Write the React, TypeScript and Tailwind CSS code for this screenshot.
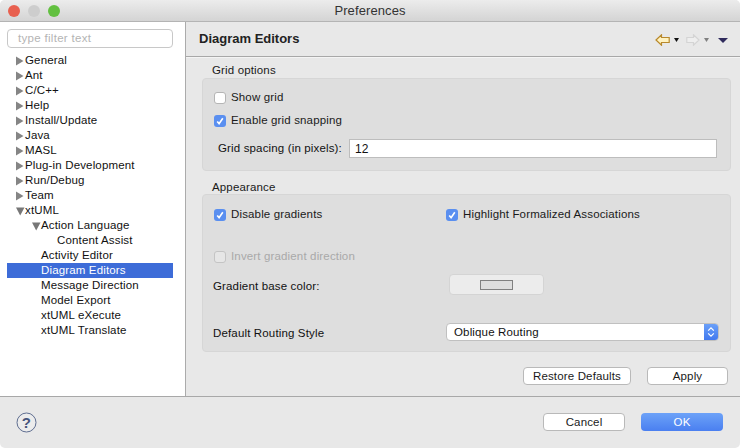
import React from "react";

function Tri({ open }: { open?: boolean }) {
  return (
    <svg width="9" height="10" viewBox="0 0 9 10" className="shrink-0">
      {open ? <path d="M0 1.5H8.5L4.2 9.5Z" fill="#777" /> : <path d="M0 0.5V9.5L7.5 5Z" fill="#858585" />}
    </svg>
  );
}

function TreeRow({ label, level = 0, arrow, open, selected }: { label: string; level?: number; arrow?: boolean; open?: boolean; selected?: boolean }) {
  const pad = level === 0 ? "pl-[9px]" : level === 1 ? "pl-[25px]" : "pl-[41px]";
  return (
    <div className={`h-[15px] flex items-center ${pad} ${selected ? "bg-[#3d6cd8] text-white" : "text-[#111]"}`}>
      <span className="w-[9px] flex justify-center">{arrow && <Tri open={open} />}</span>
      <span>{label}</span>
    </div>
  );
}

function Check({ label, checked, disabled }: { label: string; checked?: boolean; disabled?: boolean }) {
  return (
    <div className={`flex items-center gap-[5px] h-[15px] ${disabled ? "text-[#a9a9a9]" : "text-[#1a1a1a]"}`}>
      <span className={`w-[12px] h-[12px] rounded-[3px] flex items-center justify-center ${checked ? "bg-[#5a8ff0]" : disabled ? "bg-[#e6e6e6] border border-[#c4c4c4]" : "bg-white border border-[#b5b5b5]"}`}>
        {checked && (
          <svg width="8" height="8" viewBox="0 0 8 8">
            <path d="M1.2 4.4L3.1 6.6L6.8 1.2" stroke="white" strokeWidth="1.6" fill="none" />
          </svg>
        )}
      </span>
      <span>{label}</span>
    </div>
  );
}

function Btn({ label, w, primary }: { label: string; w: string; primary?: boolean }) {
  return (
    <button className={`${w} h-[18px] rounded-[4px] flex items-center justify-center pt-[1px] ${primary ? "bg-gradient-to-b from-[#6da2f8] to-[#4a7ff0] text-white" : "bg-white border border-[#b9b9b9] text-[#1a1a1a]"}`}>
      {label}
    </button>
  );
}

export default function App() {
  return (
    <div className="w-[740px] h-[448px] flex flex-col overflow-hidden bg-[#e8e8e8] rounded-[5px] text-[11.5px] tracking-[0.15px]" style={{ fontFamily: '"Liberation Sans", Arial, sans-serif' }}>
      <div className="h-[22px] shrink-0 relative flex items-center justify-center bg-gradient-to-b from-[#ececec] to-[#d4d4d4] border-b border-[#b4b4b4] text-[13px] tracking-[0.1px] text-[#333]">
        <div className="absolute left-[8px] top-[5px] flex gap-[8px]">
          <span className="w-[12px] h-[12px] rounded-full bg-[#e8604f]" />
          <span className="w-[12px] h-[12px] rounded-full bg-[#cdcdcd]" />
          <span className="w-[12px] h-[12px] rounded-full bg-[#62c040]" />
        </div>
        Preferences
      </div>
      <div className="flex-1 flex min-h-0">
        <div className="w-[186px] shrink-0 flex flex-col bg-white border-r border-[#ababab]">
          <div className="pl-[7px] pt-[7px] pb-[5px]">
            <div className="w-[166px] h-[19px] bg-white border border-[#c8c8c8] rounded-[4px] pl-[10px] flex items-center text-[#b4b4b4] tracking-[0.3px]">type filter text</div>
          </div>
          <div className="pl-[7px] pr-[12px]">
            <TreeRow label="General" arrow />
            <TreeRow label="Ant" arrow />
            <TreeRow label="C/C++" arrow />
            <TreeRow label="Help" arrow />
            <TreeRow label="Install/Update" arrow />
            <TreeRow label="Java" arrow />
            <TreeRow label="MASL" arrow />
            <TreeRow label="Plug-in Development" arrow />
            <TreeRow label="Run/Debug" arrow />
            <TreeRow label="Team" arrow />
            <TreeRow label="xtUML" arrow open />
            <TreeRow label="Action Language" level={1} arrow open />
            <TreeRow label="Content Assist" level={2} />
            <TreeRow label="Activity Editor" level={1} />
            <TreeRow label="Diagram Editors" level={1} selected />
            <TreeRow label="Message Direction" level={1} />
            <TreeRow label="Model Export" level={1} />
            <TreeRow label="xtUML eXecute" level={1} />
            <TreeRow label="xtUML Translate" level={1} />
          </div>
        </div>
        <div className="flex-1 flex flex-col">
          <div className="h-[35px] shrink-0 flex items-center justify-between pl-[13px] pr-[12px] border-b border-[#a8a8a8]">
            <span className="font-bold text-[13px] tracking-[0px] text-[#222]">Diagram Editors</span>
            <div className="flex items-center pt-[2px]">
              <svg width="15" height="12" viewBox="0 0 15 12">
                <path d="M1 6L6.5 0.8V3.5H14.2V8.5H6.5V11.2Z" fill="#fff2c0" stroke="#b8892c" strokeWidth="1.2" />
              </svg>
              <svg width="5" height="4" viewBox="0 0 5 4" className="ml-[4px]"><path d="M0 0H5L2.5 4Z" fill="#111" /></svg>
              <svg width="14" height="12" viewBox="0 0 14 12" className="ml-[7px]">
                <path d="M13 6L7.5 0.8V3.5H0.8V8.5H7.5V11.2Z" fill="#eeeeee" stroke="#d4d4d4" strokeWidth="1.2" />
              </svg>
              <svg width="5" height="4" viewBox="0 0 5 4" className="ml-[4px]"><path d="M0 0H5L2.5 4Z" fill="#808080" /></svg>
              <svg width="10" height="5" viewBox="0 0 10 5" className="ml-[9px]"><path d="M0 0H10L5 5Z" fill="#2f2a5c" /></svg>
            </div>
          </div>
          <div className="flex-1 pl-[16px] pr-[9px] pt-[5px] border-t border-[#f4f4f4]">
            <div className="pl-[10px] h-[15px] flex items-center text-[#1a1a1a]">Grid options</div>
            <div className="h-[93px] bg-[#dedede] border border-[#d6d6d6] rounded-[4px] pl-[11px] pr-[13px] pt-[11px]">
              <Check label="Show grid" />
              <div className="mt-[8px]"><Check label="Enable grid snapping" checked /></div>
              <div className="mt-[11px] flex items-center gap-[7px] pl-[4px] text-[#111]">
                <span className="w-[124px] whitespace-nowrap">Grid spacing (in pixels):</span>
                <div className="flex-1 h-[19px] bg-white border border-[#bdbdbd] pl-[5px] flex items-center text-[12px] text-[#111]">12</div>
              </div>
            </div>
            <div className="mt-[10px] pl-[10px] h-[13px] flex items-center text-[#1a1a1a]">Appearance</div>
            <div className="h-[158px] bg-[#dedede] border border-[#d6d6d6] rounded-[4px] pl-[11px] pt-[12px] pr-[11px]">
              <div className="flex">
                <div className="w-[232px]"><Check label="Disable gradients" checked /></div>
                <Check label="Highlight Formalized Associations" checked />
              </div>
              <div className="mt-[27px]"><Check label="Invert gradient direction" disabled /></div>
              <div className="mt-[10px] flex items-center h-[21px] text-[#111]">
                <span className="w-[236px] -ml-[1px] pt-[4px]">Gradient base color:</span>
                <div className="w-[95px] h-[21px] bg-[#ececec] border border-[#d4d4d4] rounded-[4px] flex items-center justify-center">
                  <span className="w-[33px] h-[10px] bg-[#dedede] border border-[#808080]" />
                </div>
              </div>
              <div className="mt-[28px] flex items-center h-[18px] text-[#111]">
                <span className="w-[233px] -ml-[1px] pt-[3px]">Default Routing Style</span>
                <div className="flex-1 h-[18px] bg-white border border-[#c0c0c0] rounded-[4px] pl-[7px] flex items-center justify-between overflow-hidden">
                  <span className="pt-[1px]">Oblique Routing</span>
                  <span className="w-[14px] h-[18px] bg-gradient-to-b from-[#6da2f8] to-[#3f76ee] flex items-center justify-center">
                    <svg width="8" height="12" viewBox="0 0 8 12"><path d="M1.2 4.6L4 1.8L6.8 4.6M1.2 7.4L4 10.2L6.8 7.4" stroke="white" strokeWidth="1.2" fill="none" /></svg>
                  </span>
                </div>
              </div>
            </div>
            <div className="mt-[15px] flex justify-end gap-[16px] pr-[3px]">
              <Btn label="Restore Defaults" w="w-[108px]" />
              <Btn label="Apply" w="w-[81px]" />
            </div>
          </div>
        </div>
      </div>
      <div className="h-[52px] shrink-0 border-t border-[#a8a8a8] flex items-center justify-between pl-[16px] pr-[17px] pb-[1px]">
        <svg width="21" height="21" viewBox="0 0 21 21">
          <circle cx="10.5" cy="10.5" r="9.5" fill="#ececec" stroke="#5f6e90" strokeWidth="1" />
          <text x="10.5" y="15.5" textAnchor="middle" fontSize="15" fontWeight="bold" fill="#46557c" fontFamily="Liberation Sans">?</text>
        </svg>
        <div className="flex gap-[16px]">
          <Btn label="Cancel" w="w-[82px]" />
          <Btn label="OK" w="w-[82px]" primary />
        </div>
      </div>
    </div>
  );
}
